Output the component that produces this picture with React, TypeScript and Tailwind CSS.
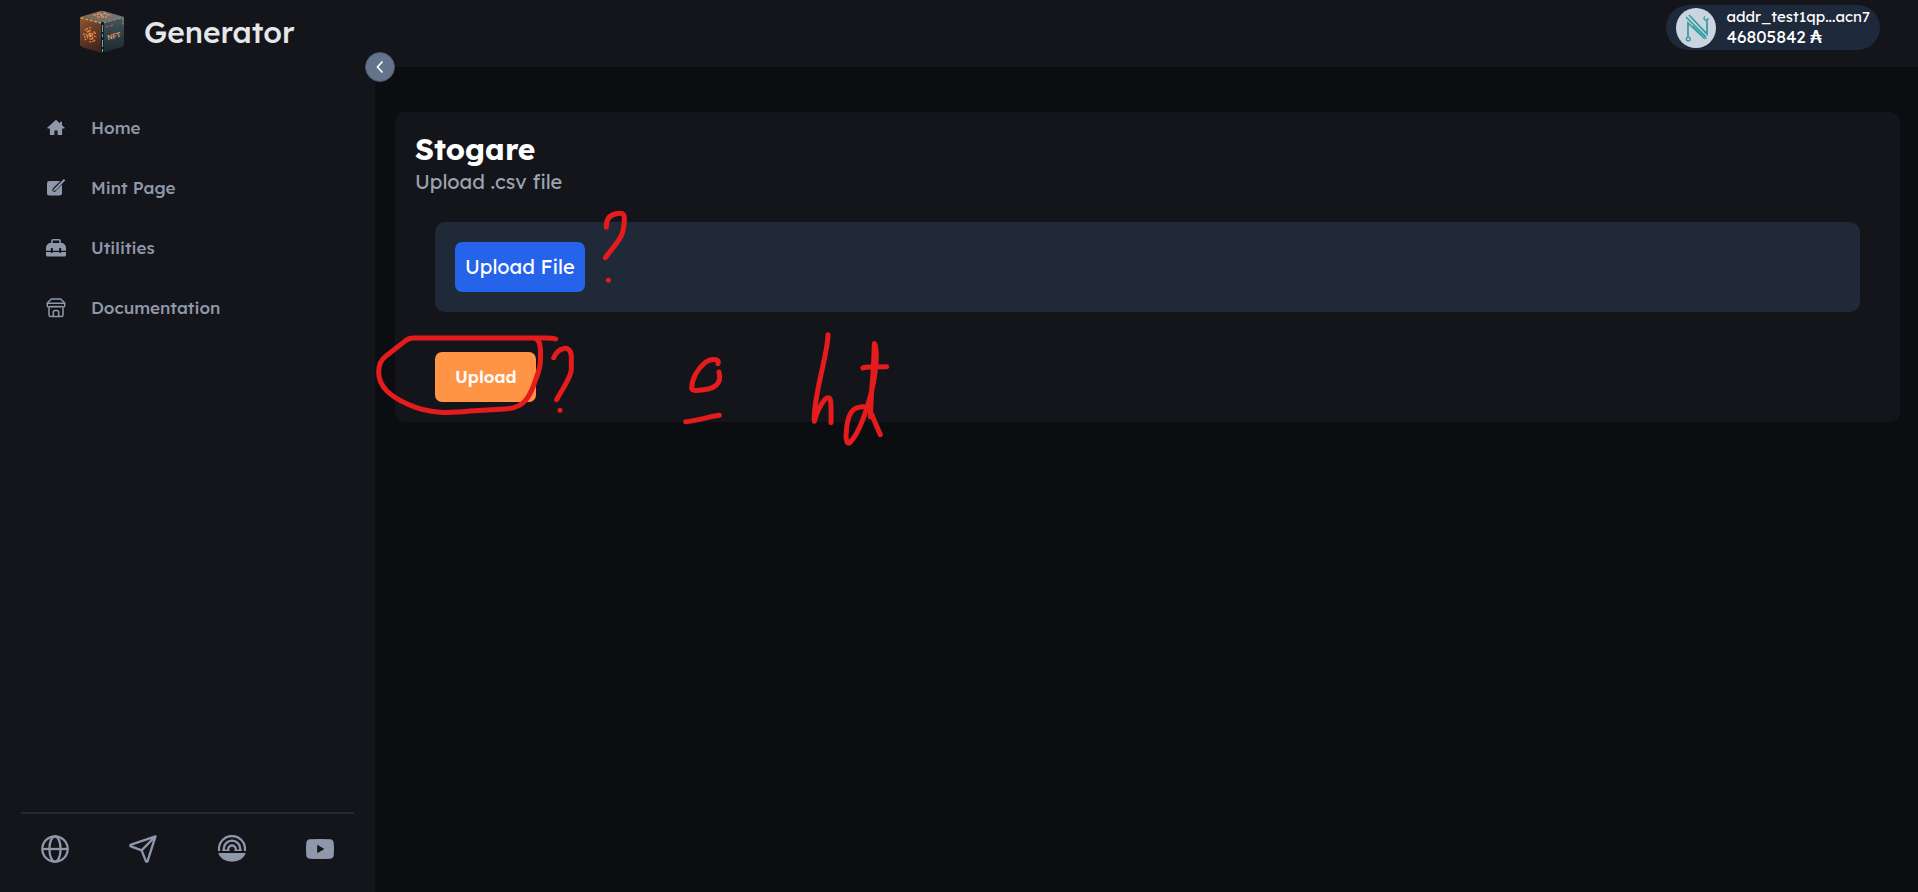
import React from 'react';

type IconProps = { className?: string };

function HomeIcon({ className }: IconProps) {
  return (
    <svg viewBox="0 0 20 20" className={className} fill="currentColor" aria-hidden="true">
      <path d="M10 1.800 1.200 9.800Q1.100 10.600 2 10.600h1.900v5.800q0 .6.6.6h3.300q.6 0 .6-.6v-3.900h3.200v3.900q0 .6.6.6h3.300q.6 0 .6-.6v-5.800H18q.9 0 .8-.8L16 7.200V3.700h-2v1.700z" />
    </svg>
  );
}

function EditIcon({ className }: IconProps) {
  return (
    <svg viewBox="0 0 20 20" className={className} aria-hidden="true">
      <rect x="1" y="3" width="15" height="14.600" rx="2.400" fill="currentColor" />
      <path d="M18 2 9.600 10.400l-1.400 1.700" fill="none" stroke="#14151a" strokeWidth="3.800" strokeLinecap="round" />
      <path d="M18 1.600 9 10.800l-.9 1.500 1.600-.8L18.500 2.400" fill="none" stroke="currentColor" strokeWidth="1.300" strokeLinecap="round" />
    </svg>
  );
}

function ToolboxIcon({ className }: IconProps) {
  return (
    <svg viewBox="0 0 20 20" className={className} aria-hidden="true">
      <path d="M5.800 6V3.200a1.400 1.400 0 0 1 1.400-1.400h5.600a1.400 1.400 0 0 1 1.400 1.400V6" fill="none" stroke="currentColor" strokeWidth="1.600" />
      <path fill="currentColor" d="M3.200 5h13.600Q20 6.800 20 10v2.700h-4.800v-2.600h-2v2.600H6.800v-2.600h-2v2.600H0V10q0-3.200 3.200-5z" />
      <path fill="currentColor" d="M0 14h4.800v.7h2V14h6.400v.7h2V14H20v3a1.500 1.500 0 0 1-1.500 1.500h-17A1.500 1.500 0 0 1 0 17z" />
    </svg>
  );
}

function StoreIcon({ className }: IconProps) {
  return (
    <svg viewBox="0 0 20 20" className={className} fill="none" stroke="currentColor" strokeWidth="1.500" strokeLinejoin="round" aria-hidden="true">
      <path d="M5.300 1h9.400l4 4v2.600a1.500 1.500 0 0 1-1.500 1.500q-1.200 0-1.800-.9-1.200 1.300-2.700 0-1.400 1.300-2.700 0-1.400 1.300-2.700 0-1.400 1.300-2.700 0-.7.900-1.800.9A1.500 1.500 0 0 1 1.300 7.600V5z" />
      <path d="M1.300 5.200h17.400M3 9.400V17a1.600 1.600 0 0 0 1.600 1.600h10.800A1.600 1.600 0 0 0 17 17V9.400M7.300 18.400v-3.800q0-2 1.800-2h1.800q1.800 0 1.800 2v3.800" />
    </svg>
  );
}

function GlobeIcon({ className }: IconProps) {
  return (
    <svg viewBox="0 0 28 28" className={className} fill="none" stroke="currentColor" strokeWidth="2.300" aria-hidden="true">
      <circle cx="14" cy="14" r="12.700" />
      <ellipse cx="14" cy="14" rx="5.600" ry="12.700" />
      <path d="M1 14h26" />
    </svg>
  );
}

function SendIcon({ className }: IconProps) {
  return (
    <svg viewBox="0 0 28 28" className={className} fill="none" stroke="currentColor" strokeWidth="2.300" strokeLinejoin="round" aria-hidden="true">
      <path d="M26.500 1.300 1.400 9.800v1.300l11.200 4.300 4.500 11.200h1.300zM12.600 15.400 26.500 1.300" />
    </svg>
  );
}

function RainbowIcon({ className }: IconProps) {
  return (
    <svg viewBox="0 0 28 28" className={className} fill="none" stroke="currentColor" strokeWidth="2.300" aria-hidden="true">
      <path d="M1 16v-2a13 13 0 0 1 26 0v2M5.700 16v-2a8.300 8.300 0 0 1 16.600 0v2M10.200 16v-1.700a3.800 3.800 0 0 1 7.600 0V16" />
      <path d="M4.600 15.200h6.700M16.700 15.200h6.700" strokeWidth="1.600" />
      <path d="M.2 18h27.600a14 10.400 0 0 1-27.600 0z" fill="currentColor" stroke="none" />
    </svg>
  );
}

function YoutubeIcon({ className }: IconProps) {
  return (
    <svg viewBox="0 0 28 28" className={className} aria-hidden="true">
      <path fill="currentColor" fillRule="evenodd" d="M4 4.200q10-.6 20 0 3.400.3 3.700 3.600.6 6.200 0 12.400-.3 3.300-3.700 3.600-10 .6-20 0-3.400-.3-3.700-3.600-.6-6.200 0-12.400Q.6 4.500 4 4.200zM11.200 9.800v8.400l7.200-4.200z" />
    </svg>
  );
}

function CubeLogo({ className }: IconProps) {
  return (
    <svg viewBox="0 0 44 44" className={className} aria-hidden="true">
      <defs>
        <linearGradient id="cube-left" x1="0" y1="0" x2="0.4" y2="1">
          <stop offset="0" stopColor="#8a5632" />
          <stop offset="1" stopColor="#46271f" />
        </linearGradient>
        <linearGradient id="cube-right" x1="0" y1="0" x2="0" y2="1">
          <stop offset="0" stopColor="#46565d" />
          <stop offset="1" stopColor="#1a282e" />
        </linearGradient>
        <linearGradient id="cube-top" x1="0" y1="0" x2="1" y2="0">
          <stop offset="0" stopColor="#7a6650" />
          <stop offset="1" stopColor="#777473" />
        </linearGradient>
      </defs>
      <path d="M0 7 22 13v30L2 37 0 35z" fill="url(#cube-left)" />
      <path d="m22 13 22-6v28l-2 2-20 6z" fill="url(#cube-right)" />
      <path d="m0 7 20-6h4l20 6-22 6z" fill="url(#cube-top)" />
      <path d="m1 8 20 5" stroke="#d6a05c" strokeWidth="1.300" strokeDasharray="3 1.500" />
      <path d="m23 13 20-5.500v7" fill="none" stroke="#7d9ba1" strokeWidth="1" strokeDasharray="4 1" />
      <path d="M22.500 12v31" stroke="#081c26" strokeWidth="2.600" />
      <path d="M22.500 15v27" stroke="#75a3ab" strokeWidth="1" strokeDasharray="7 2 3 3" />
      <path d="M10 17v16M3 24l14 3M5 19l10 12M5 30l10-9M7 18l6 14M4 27l12-4" stroke="#e58a42" strokeWidth="1.500" strokeDasharray="1.600 1.200" />
      <path d="M13 5h4l2-2 3 2 3-2 2 2h4M17 7h10M20 4l4 3" fill="none" stroke="#efa06a" strokeWidth="1.200" strokeDasharray="3 1" />
      <path d="m26 17 2-.6M30 16l3-.8" stroke="#b36a3e" strokeWidth="1.200" />
      <text x="28" y="30" fontSize="7" fontWeight="700" fill="#e09a68" fontFamily="Liberation Sans, sans-serif" transform="rotate(-14 28 30)">
        NFT
      </text>
    </svg>
  );
}

function WalletLogo({ className }: IconProps) {
  return (
    <svg viewBox="0 0 40 40" className={className} fill="none" stroke="#2f9c9e" aria-hidden="true">
      <circle cx="20" cy="20" r="20" fill="#cbd5e1" stroke="none" />
      <path d="M12 29V15l17 16" strokeWidth="1.700" />
      <path d="M31 12v14L13 7" strokeWidth="1.700" />
      <path d="m10 9 20 20" strokeWidth="1.600" />
      <path d="m17 18 14 13" strokeWidth="1" />
      <circle cx="12.300" cy="31" r="1.900" strokeWidth="1.400" />
      <path d="M29 8.500a2 2 0 1 0 3 1.500" strokeWidth="1.400" />
    </svg>
  );
}

const navItems = [
  { label: 'Home', Icon: HomeIcon },
  { label: 'Mint Page', Icon: EditIcon },
  { label: 'Utilities', Icon: ToolboxIcon },
  { label: 'Documentation', Icon: StoreIcon },
];

const socialLinks = [
  { label: 'Website', Icon: GlobeIcon },
  { label: 'Telegram', Icon: SendIcon },
  { label: 'Explorer', Icon: RainbowIcon },
  { label: 'YouTube', Icon: YoutubeIcon },
];

function Sidebar() {
  return (
    <aside className="relative flex w-[375px] shrink-0 flex-col bg-[#14151a]">
      <a href="#" className="flex h-16 items-center gap-5 pl-20 text-[30px] leading-9 font-medium text-gray-200">
        <CubeLogo className="size-11" />
        Generator
      </a>
      <nav className="mt-[34px] flex flex-col">
        {navItems.map(({ label, Icon }) => (
          <a key={label} href="#" className="flex h-[60px] items-center gap-[25px] pl-[46px] text-[17px] font-medium text-[#8f98aa]">
            <Icon className="size-5" />
            {label}
          </a>
        ))}
      </nav>
      <div className="mx-[21px] mt-auto flex h-20 items-center justify-between border-t-2 border-[#232a32] px-5 pb-2 text-[#8f98aa]">
        {socialLinks.map(({ label, Icon }) => (
          <a key={label} href="#" aria-label={label}>
            <Icon className="size-7" />
          </a>
        ))}
      </div>
      <button
        type="button"
        aria-label="Collapse sidebar"
        className="absolute top-[52px] -right-5 z-10 flex size-[30px] items-center justify-center rounded-full border border-slate-600 bg-[#64748b] text-white"
      >
        <svg viewBox="0 0 12 14" className="h-3.5 w-3" fill="none" stroke="currentColor" strokeWidth="1.700" aria-hidden="true">
          <path d="M8.500 1.500 3.500 7l5 5.500" />
        </svg>
      </button>
    </aside>
  );
}

function Annotations() {
  return (
    <svg
      viewBox="0 0 920 460"
      className="pointer-events-none absolute top-0 left-0 z-20 h-[460px] w-[920px]"
      fill="none"
      stroke="#e61c1c"
      strokeLinecap="round"
      strokeLinejoin="round"
      aria-hidden="true"
    >
      <g transform="translate(370 190) scale(.33333)" strokeWidth="15">
        <path d="M709 112C708 88 718 72 748 70Q765 68 763 88C762 142 746 150 706 203" />
        <path d="M715 271h.1" />
        <path d="M557 447Q550 444 530 444H130Q117 444 107 452L48 498Q26 514 26 547C26 593 65 620 112 642C180 674 242 669 300 663L404 657C463 655 480 619 495 575C512 530 513 520 511 475Q510 448 492 444" />
        <path d="M551 503C566 470 603 463 604 500V538C604 562 577 596 560 629" />
        <path d="M570 661h.1" />
      </g>
      <g transform="translate(660 310) scale(.33333)" strokeWidth="15">
        <path d="M174 161C180 145 152 144 135 158C112 177 95 207 95 235Q98 243 115 241C162 239 187 223 177 186" />
        <path d="M77 335C110 333 145 320 178 316" />
        <path d="M504 74C504 132 458 264 463 334Q475 290 495 268Q510 256 512 275Q514 290 513 338" />
        <path d="M609 174Q614 171 630 171L680 170" />
        <path d="M643 101Q641 180 635 240L631 320M643 101Q652 115 647 170C640 250 603 365 570 397Q560 407 558 380C560 306 580 289 610 290Q628 291 636 316L661 374" />
      </g>
    </svg>
  );
}

export default function App() {
  return (
    <div className="relative flex min-h-screen bg-[#0c0d11] font-['Lexend','Inter',sans-serif]">
      <Sidebar />
      <div className="flex min-w-0 flex-1 flex-col">
        <header className="flex h-[67px] items-start justify-end bg-[#14151a] pt-[5px] pr-[38px]">
          <button type="button" className="flex h-[45px] items-center gap-2.5 rounded-full bg-[#1e293b] px-2.5 text-left text-white">
            <WalletLogo className="size-10 shrink-0" />
            <span className="flex flex-col pb-0.5">
              <span className="text-[15px] leading-5">addr_test1qp...acn7</span>
              <span className="text-[17px] leading-5">
                46805842 <span className="font-['Noto_Sans',sans-serif] text-lg leading-none font-semibold">₳</span>
              </span>
            </span>
          </button>
        </header>
        <main className="pt-[45px] pr-[18px] pl-5">
          <section className="rounded-[10px] bg-[#14151a] px-5 pt-[19px] pb-5">
            <h1 className="text-[30px] leading-9 font-bold text-white">Stogare</h1>
            <p className="text-xl leading-[30px] text-[#9ca3af]">Upload .csv file</p>
            <div className="px-5 pt-[25px]">
              <div className="rounded-[10px] bg-[#1f2937] p-5">
                <button type="button" className="h-[50px] rounded-[7px] bg-[#2563eb] px-2.5 text-xl text-white">
                  Upload File
                </button>
              </div>
              <button type="button" className="mt-10 h-[50px] rounded-[7px] bg-[#ff9447] px-5 text-[17px] font-semibold text-white">
                Upload
              </button>
            </div>
          </section>
        </main>
      </div>
      <Annotations />
    </div>
  );
}
